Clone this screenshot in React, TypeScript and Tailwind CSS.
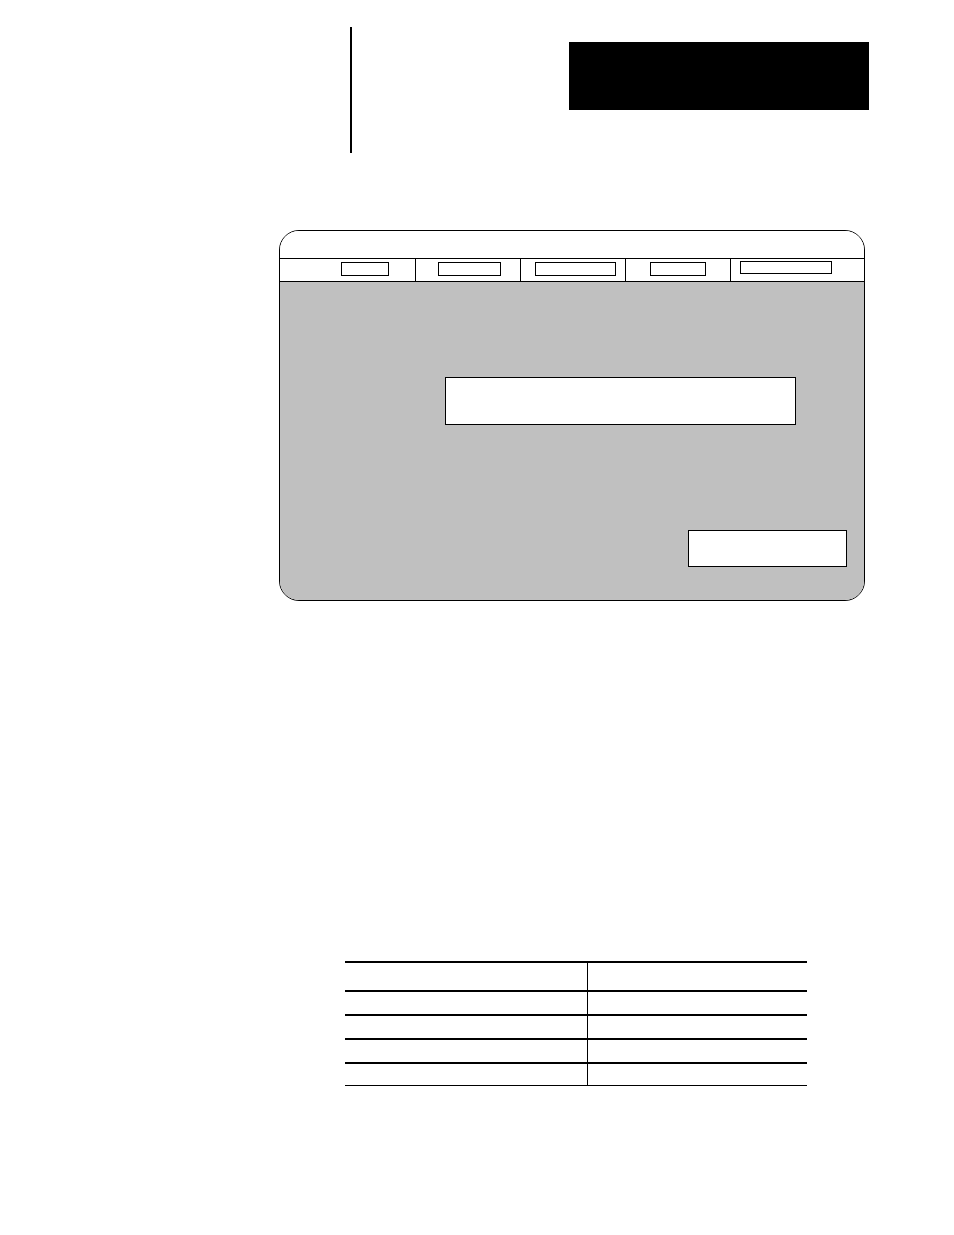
import React from 'react';

// Header row cells: width of the cell, offset/size of the small inner field
const headerCells = [
  { w: 'w-[136px]', box: 'ml-[61px] mt-[3px] w-[48px] h-[14px]' },
  { w: 'w-[105px]', box: 'ml-[22px] mt-[3px] w-[63px] h-[14px]' },
  { w: 'w-[105px]', box: 'ml-[14px] mt-[3px] w-[81px] h-[14px]' },
  { w: 'w-[105px]', box: 'ml-[24px] mt-[3px] w-[56px] h-[14px]' },
  { w: 'flex-1', box: 'ml-[9px] mt-[2px] w-[92px] h-[13px]' },
];

const tableRows = ['h-[29px]', 'h-[24px]', 'h-[24px]', 'h-[24px]', 'h-[23px]'];

export default function App() {
  return (
    <div className="w-[954px] h-[1235px] bg-white flex flex-col" style={{ fontFamily: '"Liberation Sans", Arial, sans-serif' }}>
      {/* Top margin rule and chapter tab */}
      <div className="flex pt-[27px]">
        <div className="ml-[350px] w-[2px] h-[126px] bg-black" />
        <div className="ml-[217px] mt-[15px] w-[300px] h-[68px] bg-black self-start" />
      </div>

      {/* Screen panel */}
      <div className="mt-[77px] ml-[279px] w-[586px] h-[371px] border border-black rounded-[20px] overflow-hidden flex flex-col">
        <div className="h-[27px] bg-white" />
        <div className="h-[24px] border-y border-black flex bg-white">
          {headerCells.map((c, i) => (
            <div key={i} className={`${c.w} ${i < headerCells.length - 1 ? 'border-r border-black' : ''}`}>
              <div className={`${c.box} border border-black`} />
            </div>
          ))}
        </div>
        <div className="flex-1 bg-[#c0c0c0] flex flex-col">
          <div className="ml-[165px] mt-[95px] w-[351px] h-[48px] border border-black bg-white" />
          <div className="ml-[408px] mt-[105px] w-[159px] h-[37px] border border-black bg-white" />
        </div>
      </div>

      {/* Table */}
      <div className="mt-[360px] ml-[345px] w-[462px] border-b border-black">
        {tableRows.map((h, i) => (
          <div key={i} className={`${h} border-t-2 border-black flex`}>
            <div className="w-[243px] border-r border-black" />
            <div className="flex-1" />
          </div>
        ))}
      </div>
    </div>
  );
}
